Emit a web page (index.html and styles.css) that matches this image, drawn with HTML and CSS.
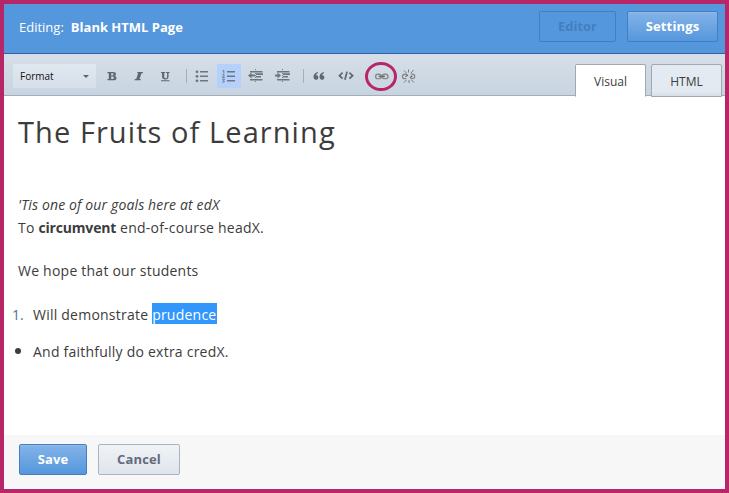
FILE: index.html
```html
<!DOCTYPE html>
<html lang="en">
<head>
<meta charset="utf-8">
<title>Blank HTML Page</title>
<link rel="stylesheet" href="styles.css">
</head>
<body>
<div class="modal">
  <header class="header">
    <h2 class="title"><span class="title-label">Editing:</span><span class="title-name">Blank HTML Page</span></h2>
    <div class="modes">
      <a class="btn btn-disabled">Editor</a>
      <a class="btn btn-primary">Settings</a>
    </div>
  </header>
  <div class="toolbar">
    <div class="format"><span>Format</span><i class="caret"></i></div>
    <div class="tools">
      <a class="tool"><svg viewBox="0 0 24 24"><path fill-rule="evenodd" d="M7.500 8h5.500c2 0 3 .8 3 2.100 0 1-.5 1.500-1.400 1.800 1.200.2 1.900.9 1.900 2 0 1.500-1.100 2.300-3.200 2.300H7.500v-1.200h1.300V9.200H7.500zM11.200 9.300v2.100h.9c1 0 1.400-.4 1.400-1.100s-.4-1-1.300-1zM11.200 12.600v2.400h1.100c1 0 1.500-.4 1.500-1.200s-.5-1.200-1.500-1.200z"/></svg></a>
      <a class="tool"><svg viewBox="0 0 24 24"><path d="M10.500 8h5.500l-.3 1.200h-1.200l-2 5.800h1.300l-.3 1.200H7.500l.3-1.200h1.400l2-5.800h-1z"/></svg></a>
      <a class="tool"><svg viewBox="0 0 24 24"><path d="M7 8h4.200v1.100h-1v3.700c0 1 .5 1.400 1.400 1.400s1.500-.5 1.500-1.500V9.100h-1V8H15.500v1.100h-1v3.700c0 1.700-1.100 2.600-3.100 2.600s-3.300-.9-3.300-2.600V9.100H7zM7 16.300h8.500v1H7z"/></svg></a>
      <i class="sep"></i>
      <a class="tool"><svg class="soft" viewBox="0 0 24 24"><circle cx="7" cy="7.800" r="1.400"/><circle cx="7" cy="12.300" r="1.400"/><circle cx="7" cy="16.800" r="1.400"/><path d="M10 7h8v1.500h-8zM10 11.500h8V13h-8zM10 16h8v1.500h-8z"/></svg></a>
      <a class="tool tool-active"><svg class="soft" viewBox="0 0 24 24"><path d="M10 7h8v1.500h-8zM10 11.500h8V13h-8zM10 16h8v1.500h-8z"/><path class="thin" d="M5.500 7l1.300-.7v3.200M5.300 11q2.500-1 2 .3L5.400 13.500h2.500M5.300 15.300h2.200L6.300 16.500q1.500.2.900 1.400-.8.700-2 .1"/></svg></a>
      <a class="tool"><svg class="soft" viewBox="0 0 24 24"><path d="M6 7h12.500v1.500H6zM12 9.300h7V11h-7zM12 12h5v1.500h-5zM6 15h12.500v1.500H6zM4 11.500L7.500 8.500v2H11v2H7.500v2z"/><path class="thin dotted" d="M11.500 5v14"/></svg></a>
      <a class="tool"><svg class="soft" viewBox="0 0 24 24"><path d="M6 7h12.500v1.500H6zM12 9.300h7V11h-7zM12 12h5v1.500h-5zM6 15h12.500v1.500H6zM10 11.500L6.500 8.500v2H4v2h2.500v2z"/><path class="thin dotted" d="M11.500 5v14"/></svg></a>
      <i class="sep"></i>
      <a class="tool"><svg viewBox="0 0 24 24"><path d="M11 8v1q-2 .8-2 2.400c1.500-.2 2.300.6 2.300 2s-1 2.300-2.300 2.300c-1.600 0-2.500-1.200-2.500-2.900C6.500 10.500 8 8.500 11 8zM17 8v1q-2 .8-2 2.400c1.500-.2 2.300.6 2.300 2s-1 2.300-2.300 2.300c-1.600 0-2.500-1.200-2.500-2.900C12.500 10.500 14 8.500 17 8z"/></svg></a>
      <a class="tool"><svg viewBox="0 0 24 24"><path class="line" d="M8.600 8.700L5.400 11.700l3.200 3M15.400 8.700l3.200 3-3.200 3M13.100 7.600l-2.200 8.200"/></svg></a>
      <i class="sep sep-link"></i>
      <a class="tool tool-link"><svg viewBox="0 0 24 24"><g class="chain"><rect x="5.600" y="10.200" width="5.600" height="4.400" rx="2.200"/><rect x="12.300" y="10.200" width="5.600" height="4.400" rx="2.200"/><path class="bar" d="M8.500 12.400h6.500"/></g></svg><i class="ring"></i></a>
      <a class="tool"><svg viewBox="0 0 24 24"><g class="chain"><path d="M10 10.200H8q-2.500 0-2.500 2.200T8 14.600h1.500M13.500 14.600H15q2.700 0 2.700-2.300T15 10.100h-1.500"/><path class="bar" d="M8.500 12.800l2.500-2M13 13.800l2.300-2"/></g><path class="thin" d="M11.500 5.500v3M7 6.500l2.500 2.500M16.500 6l-2.500 3M12 16v3M7 18.500l2.500-2.500M17 18.500l-2.500-2.500"/></svg></a>
    </div>
    <div class="tabs">
      <a class="tab tab-current">Visual</a>
      <a class="tab">HTML</a>
    </div>
  </div>
  <main class="content">
    <h1>The Fruits of Learning</h1>
    <p class="intro"><em>'Tis one of our goals here at edX</em><br><span class="line-two">To <strong>circumvent</strong> end-of-course headX.</span></p>
    <p class="hope">We hope that our students</p>
    <div class="item"><span class="number">1.</span><span class="task">Will demonstrate <mark>prudence</mark></span></div>
    <div class="item item-bullet"><i class="bullet"></i><span class="extra">And faithfully do extra credX.</span></div>
  </main>
  <footer class="footer">
    <a class="btn btn-primary btn-save">Save</a>
    <a class="btn btn-secondary">Cancel</a>
  </footer>
</div>
</body>
</html>
```
FILE: styles.css
```css
* { box-sizing: border-box; }
body {
  margin: 0;
  font-family: "Open Sans", "Noto Sans", sans-serif;
  font-size: 14px;
  color: #3c3c3c;
}
.modal {
  width: 729px;
  height: 493px;
  border: 4px solid #b72667;
  background: #fff;
  display: flex;
  flex-direction: column;
}
.header {
  height: 50px;
  flex: none;
  display: flex;
  justify-content: space-between;
  align-items: flex-start;
  padding: 7px 7px 0 15px;
  background: #5597dd;
  border-bottom: 1px solid #2f649c;
}
.title {
  margin: 6px 0 0;
  font-size: 13px;
  line-height: 20px;
  font-weight: 400;
  color: #fff;
  display: flex;
  gap: 7px;
}
.title-name { font-weight: 700; }
.modes { display: flex; gap: 11px; }
.btn {
  height: 31px;
  border: 1px solid #437fbf;
  border-radius: 2px;
  font-size: 13px;
  line-height: 29px;
  font-weight: 700;
  letter-spacing: .15px;
  text-align: center;
}
.btn-disabled { width: 77px; color: #437fbf; letter-spacing: 0; }
.btn-primary {
  width: 91px;
  color: #fff;
  background: linear-gradient(#84b3e8, #5597dd);
  box-shadow: inset 0 1px 0 #8fbaea;
}
.toolbar {
  height: 42px;
  flex: none;
  display: flex;
  align-items: flex-start;
  padding: 10px 3px 0 9px;
  background: linear-gradient(#d6dfe9, #c8d4e1);
  border-bottom: 1px solid #a2adb7;
}
.format {
  width: 83px;
  height: 24px;
  padding: 0 7px;
  display: flex;
  align-items: center;
  justify-content: space-between;
  background: linear-gradient(#dfe7ef, #d6e0ea);
  font-size: 10px;
  color: #111;
}
.caret {
  border: solid transparent;
  border-width: 3px 3px 0;
  border-top-color: #59646d;
}
.tools { display: flex; gap: 3px; margin-left: 4px; }
.tool { position: relative; width: 24px; height: 24px; }
.tool svg { display: block; width: 24px; height: 24px; fill: #5c676f; }
.tool .soft { fill: #6b767e; }
.tool-active { background: #b5d1fb; }
.sep {
  width: 1px;
  height: 14px;
  margin: 5px 0 0 5px;
  background: #a5afb8;
}
.sep-link { visibility: hidden; }
.thin { fill: none; stroke: #68737b; stroke-width: .9; }
.dotted { stroke-dasharray: 1 1; }
.line { fill: none; stroke: #5c676f; stroke-width: 1.7; }
.chain { fill: #d9dedf; stroke: #858b8e; stroke-width: 1.4; }
.bar { fill: none; stroke: #666c70; stroke-width: 1.4; }
.ring {
  position: absolute;
  left: -5px;
  top: -2px;
  width: 32px;
  height: 29px;
  border: 3px solid #b72667;
  border-radius: 50%;
}
.tabs { margin-left: auto; display: flex; gap: 5px; }
.tab {
  width: 71px;
  height: 33px;
  border: 1px solid #a2a8ae;
  border-radius: 2px 2px 0 0;
  background: linear-gradient(#e4eaf2 85%, #d7dde7);
  font-size: 12px;
  line-height: 34px;
  text-align: center;
}
.tab-current { background: #fff; border-bottom-color: #fff; }
.content { flex: 1; padding: 14px 14px 0; }
h1 {
  margin: 0;
  font-size: 29px;
  line-height: 44px;
  font-weight: 400;
  letter-spacing: 1.080px;
}
.intro { margin: 39px 0 0; line-height: 23px; }
.intro em { letter-spacing: .14px; }
.line-two, .hope, .task, .extra { letter-spacing: .23px; }
.line-two strong { letter-spacing: -.18px; }
.hope { margin: 20px 0 0; line-height: 23px; }
.item {
  display: flex;
  height: 23px;
  margin: 21px 0 0 -6px;
  line-height: 23px;
}
.number { width: 21px; color: #4f6f94; }
.item-bullet { margin-top: 14px; }
.bullet {
  width: 6px;
  height: 6px;
  margin: 8px 12px 0 3px;
  border-radius: 50%;
  background: #3c3c3c;
}
mark {
  display: inline-block;
  height: 21px;
  padding-right: 1px;
  line-height: 23px;
  vertical-align: top;
  background: #3297fd;
  color: #fff;
}
.footer {
  height: 54px;
  flex: none;
  display: flex;
  gap: 11px;
  padding: 9px 15px;
  background: #f7f7f7;
}
.btn-save { width: 68px; }
.btn-secondary {
  width: 82px;
  color: #626b7c;
  background: linear-gradient(#f0f3f6, #dfe5ed);
  border-color: #adb3c0;
}
```
